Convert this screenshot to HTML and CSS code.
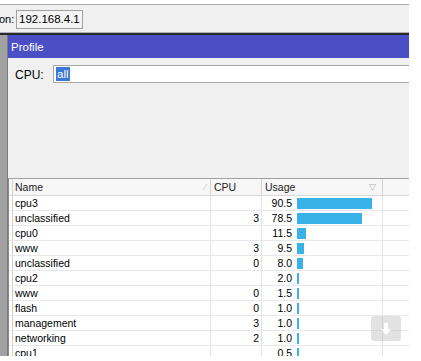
FILE: index.html
```html
<!DOCTYPE html>
<html>
<head>
<meta charset="utf-8">
<link rel="stylesheet" href="styles.css">
</head>
<body>
<div class="screen">
  <div class="topbar">
    <span class="toplabel">on:</span>
    <span class="addr">192.168.4.1</span>
  </div>
  <div class="main">
    <div class="strip"></div>
    <div class="window">
      <div class="title">Profile</div>
      <div class="panel">
        <div class="cpurow">
          <span class="cpulabel">CPU:</span>
          <div class="cpuinput"><span class="sel">all</span></div>
        </div>
        <div class="table">
          <div class="row head">
            <div class="c mark"></div>
            <div class="c name">Name<span class="grip">⁄</span></div>
            <div class="c cpu">CPU</div>
            <div class="c usage">Usage<span class="filt">▽</span></div>
            <div class="c extra"></div>
          </div>
          <div class="row"><div class="c mark"></div><div class="c name">cpu3</div><div class="c cpu"></div><div class="c usage"><span class="num">90.5</span><span class="bar" style="width:75px"></span></div><div class="c extra"></div></div>
          <div class="row"><div class="c mark"></div><div class="c name">unclassified</div><div class="c cpu">3</div><div class="c usage"><span class="num">78.5</span><span class="bar" style="width:65px"></span></div><div class="c extra"></div></div>
          <div class="row"><div class="c mark"></div><div class="c name">cpu0</div><div class="c cpu"></div><div class="c usage"><span class="num">11.5</span><span class="bar" style="width:9px"></span></div><div class="c extra"></div></div>
          <div class="row"><div class="c mark"></div><div class="c name">www</div><div class="c cpu">3</div><div class="c usage"><span class="num">9.5</span><span class="bar" style="width:7px"></span></div><div class="c extra"></div></div>
          <div class="row"><div class="c mark"></div><div class="c name">unclassified</div><div class="c cpu">0</div><div class="c usage"><span class="num">8.0</span><span class="bar" style="width:6px"></span></div><div class="c extra"></div></div>
          <div class="row"><div class="c mark"></div><div class="c name">cpu2</div><div class="c cpu"></div><div class="c usage"><span class="num">2.0</span><span class="bar" style="width:2px"></span></div><div class="c extra"></div></div>
          <div class="row"><div class="c mark"></div><div class="c name">www</div><div class="c cpu">0</div><div class="c usage"><span class="num">1.5</span><span class="bar" style="width:2px"></span></div><div class="c extra"></div></div>
          <div class="row"><div class="c mark"></div><div class="c name">flash</div><div class="c cpu">0</div><div class="c usage"><span class="num">1.0</span><span class="bar" style="width:2px"></span></div><div class="c extra"></div></div>
          <div class="row"><div class="c mark"></div><div class="c name">management</div><div class="c cpu">3</div><div class="c usage"><span class="num">1.0</span><span class="bar" style="width:2px"></span></div><div class="c extra"></div></div>
          <div class="row"><div class="c mark"></div><div class="c name">networking</div><div class="c cpu">2</div><div class="c usage"><span class="num">1.0</span><span class="bar" style="width:2px"></span></div><div class="c extra"></div></div>
          <div class="row"><div class="c mark"></div><div class="c name">cpu1</div><div class="c cpu"></div><div class="c usage"><span class="num">0.5</span><span class="bar" style="width:2px"></span></div><div class="c extra"></div></div>
          <div class="fab">
            <svg width="12" height="14" viewBox="0 0 12 14"><rect x="4" y="1" width="4" height="7" fill="#fff"/><polygon points="1,7 11,7 6,13" fill="#fff"/></svg>
          </div>
        </div>
      </div>
    </div>
  </div>
</div>
</body>
</html>
```
FILE: styles.css
```css
html, body {
  margin: 0;
  padding: 0;
  background: #fff;
}
body {
  font-family: "Liberation Sans", Arial, sans-serif;
  font-size: 10.5px;
  color: #000;
  overflow: hidden;
  width: 421px;
  height: 361px;
}
.screen {
  width: 409px;
  height: 352px;
  overflow: hidden;
  padding-top: 4px;
}
.topbar {
  height: 27px;
  background: #f0f0f0;
  border-top: 1px solid #a8a8a8;
  border-bottom: 1px solid #b0b0b0;
  display: flex;
  align-items: center;
  font-size: 11px;
}
.toplabel {
  margin-left: -1px;
  width: 17px;
}
.addr {
  border: 1px solid #a0a0a0;
  background: #f4f4f4;
  height: 17px;
  line-height: 17px;
  padding: 0 2px 0 2px;
  margin-top: 1px;
  font-size: 11.5px;
}
.main {
  display: flex;
  border-top: 2px solid #2a2a2a;
  height: 330px;
}
.strip {
  width: 7px;
  background: #a2a2a2;
  border-right: 1px solid #7a7a7a;
  flex: none;
}
.window {
  flex: 1;
  display: flex;
  flex-direction: column;
  min-width: 0;
}
.title {
  height: 23px;
  background: #4b4fc6;
  color: #fff;
  font-size: 11.5px;
  line-height: 24px;
  padding-left: 3px;
  flex: none;
}
.panel {
  flex: 1;
  background: #f0f0f0;
  padding-top: 7px;
  display: flex;
  flex-direction: column;
}
.cpurow {
  display: flex;
  align-items: center;
  height: 18px;
}
.cpulabel {
  width: 38px;
  padding-left: 7px;
  font-size: 12px;
  flex: none;
  padding-top: 1px;
}
.cpuinput {
  flex: 1;
  background: #fff;
  border-top: 1px solid #a8a8a8;
  border-bottom: 1px solid #a8a8a8;
  border-left: 1px solid #a8a8a8;
  height: 16px;
  display: flex;
  align-items: center;
  padding-left: 2px;
  font-size: 11.5px;
}
.sel {
  background: #3a78d6;
  color: #fff;
  line-height: 14px;
  padding: 0 1px;
}
.table {
  margin-top: 95px;
  flex: 1;
  background: #fff;
  border-left: 1px solid #8a8a8a;
  border-top: 1px solid #a0a0a0;
  position: relative;
  overflow: hidden;
}
.row {
  display: flex;
  height: 15px;
  border-bottom: 1px solid #e8e8e8;
  box-sizing: border-box;
  line-height: 14px;
}
.row.head {
  height: 17px;
  line-height: 16px;
  background: #f6f6f6;
  border-bottom: 1px solid #d8d8d8;
  color: #222;
}
.c {
  box-sizing: border-box;
  border-right: 1px solid #e4e4e4;
  white-space: nowrap;
  overflow: hidden;
  flex: none;
}
.head .c {
  border-right-color: #d4d4d4;
}
.mark {
  width: 4px;
  border-right-color: #d0d0d0;
}
.name {
  width: 198px;
  padding-left: 2px;
  position: relative;
}
.cpu {
  width: 51px;
  text-align: right;
  padding-right: 2px;
}
.head .cpu {
  text-align: left;
  padding-left: 3px;
}
.usage {
  width: 121px;
  display: flex;
  align-items: center;
  position: relative;
}
.head .usage {
  padding-left: 3px;
}
.num {
  width: 30px;
  text-align: right;
  flex: none;
}
.bar {
  display: block;
  height: 11px;
  background: #38b2e9;
  margin-left: 5px;
  flex: none;
}
.extra {
  flex: 1;
  border-right: none;
}
.grip {
  position: absolute;
  right: 4px;
  top: 0;
  color: #c8c8c8;
  font-size: 9px;
}
.filt {
  position: absolute;
  right: 6px;
  top: 0;
  color: #b0b0b0;
  font-size: 9px;
}
.fab {
  position: absolute;
  left: 362px;
  top: 137px;
  width: 30px;
  height: 25px;
  border-radius: 3px;
  background: rgba(190, 190, 190, 0.45);
  display: flex;
  align-items: center;
  justify-content: center;
}
```
